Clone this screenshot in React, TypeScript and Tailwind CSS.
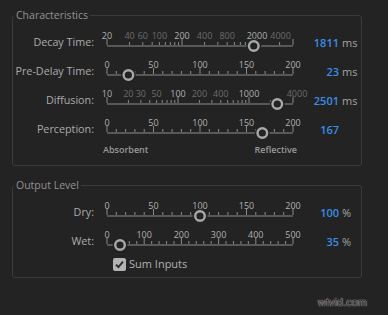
import React from "react";

type Tick = { x: number; major?: boolean };
type Label = { x: number; text: string; dim?: boolean };

const BG = "#232323";

const lin = (min: number, max: number) => (v: number) => 7 + (186 * (v - min)) / (max - min);
const decayX = (v: number) => 7 + 75 * Math.log10(v / 20);
const diffX = (v: number) => 7 + 71 * Math.log10(v / 10);

const range = (from: number, to: number, step: number) => {
  const out: number[] = [];
  for (let v = from; v <= to; v += step) out.push(v);
  return out;
};

// linear scale: minor every `minor`, major every `major`
const linearScale = (max: number, minor: number, major: number) => {
  const f = lin(0, max);
  const ticks: Tick[] = range(0, max, minor).map((v) => ({ x: f(v), major: v % major === 0 }));
  const labels: Label[] = range(0, max, major).map((v) => ({ x: f(v), text: String(v) }));
  return { ticks, labels, f };
};

const decay = {
  ticks: [
    ...[20, 200, 2000].map((v) => ({ x: decayX(v), major: true })),
    ...[40, 60, 80, 100, 120, 140, 160, 180, 400, 600, 800, 1000, 1200, 1400, 1600, 1800, 4000].map((v) => ({
      x: decayX(v),
    })),
    { x: 193, major: true },
  ],
  labels: [
    { x: decayX(20), text: "20" },
    { x: decayX(40), text: "40", dim: true },
    { x: decayX(60), text: "60", dim: true },
    { x: decayX(100), text: "100", dim: true },
    { x: decayX(200), text: "200" },
    { x: decayX(400), text: "400", dim: true },
    { x: decayX(800), text: "800", dim: true },
    { x: decayX(2000), text: "2000" },
    { x: decayX(4000) + 1, text: "4000", dim: true },
  ],
};

const diffusion = {
  ticks: [
    ...[10, 100, 1000].map((v) => ({ x: diffX(v), major: true })),
    ...[...range(20, 90, 10), ...range(200, 900, 100), 2000, 3000].map((v) => ({ x: diffX(v) })),
    { x: 193, major: true },
  ],
  labels: [
    { x: diffX(10), text: "10" },
    { x: diffX(20), text: "20", dim: true },
    { x: diffX(30), text: "30", dim: true },
    { x: diffX(50), text: "50", dim: true },
    { x: diffX(100), text: "100" },
    { x: diffX(200), text: "200", dim: true },
    { x: diffX(400), text: "400", dim: true },
    { x: diffX(1000), text: "1000" },
    { x: 197, text: "4000", dim: true },
  ],
};

const two = linearScale(200, 10, 50);
const five = linearScale(500, 20, 100);

const Slider = ({ ticks, labels, knob }: { ticks: Tick[]; labels: Label[]; knob: number }) => (
  <svg width="210" height="29" className="shrink-0 ml-[6px]">
    <rect x="7" y="17" width="186" height="2" fill="#585858" />
    {ticks.map((t, i) => (
      <rect key={i} x={t.x - 0.5} y={t.major ? 11 : 14} width="1" height={t.major ? 6 : 3} fill="#8a8a8a" />
    ))}
    {labels.map((l, i) => (
      <text
        key={i}
        x={l.x}
        y="7.5"
        textAnchor="middle"
        dominantBaseline="central"
        fontSize="9"
        fill={l.dim ? "#6c6c6c" : "#b2b2b2"}
      >
        {l.text}
      </text>
    ))}
    <circle cx={knob} cy="18" r="7.5" fill={BG} />
    <circle cx={knob} cy="18" r="4.8" fill={BG} stroke="#a9a9a9" strokeWidth="2.4" />
  </svg>
);

const Row = ({
  label,
  value,
  unit,
  children,
}: {
  label: string;
  value: string;
  unit?: string;
  children: React.ReactNode;
}) => (
  <div className="flex items-start h-[29px]">
    <div className="w-[81px] shrink-0 text-right text-[10.75px] leading-[15px] mt-[7px] text-[#ababab] whitespace-nowrap">
      {label}
    </div>
    {children}
    <div className="flex items-baseline mt-[7px] text-[11px] leading-[15px]">
      <span className="w-[29px] text-right font-semibold text-[#3a8ee6]">{value}</span>
      {unit && <span className="ml-[3px] text-[#a3a3a3]">{unit}</span>}
    </div>
  </div>
);

const Group = ({ title, className, children }: { title: string; className: string; children: React.ReactNode }) => (
  <fieldset className={`w-[350px] border border-[#3a3a3a] rounded-[3px] ${className}`}>
    <legend className="ml-[1px] px-[2px] text-[10.5px] leading-[15px] text-[#929292]">{title}</legend>
    {children}
  </fieldset>
);

export default function App() {
  return (
    <div className="relative w-[388px] h-[315px] overflow-hidden bg-[#232323] pt-[8px] pl-[12px] font-['Open_Sans',sans-serif]">
      <Group title="Characteristics" className="h-[158px]">
        <div className="mt-[5px]">
          <Row label="Decay Time:" value="1811" unit="ms">
            <Slider ticks={decay.ticks} labels={decay.labels} knob={decayX(1811)} />
          </Row>
          <Row label="Pre-Delay Time:" value="23" unit="ms">
            <Slider ticks={two.ticks} labels={two.labels} knob={two.f(23)} />
          </Row>
          <Row label="Diffusion:" value="2501" unit="ms">
            <Slider ticks={diffusion.ticks} labels={diffusion.labels} knob={diffX(2501)} />
          </Row>
          <Row label="Perception:" value="167">
            <Slider ticks={two.ticks} labels={two.labels} knob={two.f(167)} />
          </Row>
          <div className="flex h-[12px] text-[9px] leading-[12px] font-semibold text-[#9a9a9a]">
            <div className="w-[90px]" />
            <span>Absorbent</span>
            <div className="flex-1" />
            <span>Reflective</span>
            <div className="w-[64px]" />
          </div>
        </div>
      </Group>

      <Group title="Output Level" className="h-[100px] mt-[12px]">
        <div className="mt-[5px]">
          <Row label="Dry:" value="100" unit="%">
            <Slider ticks={two.ticks} labels={two.labels} knob={two.f(100)} />
          </Row>
          <Row label="Wet:" value="35" unit="%">
            <Slider ticks={five.ticks} labels={five.labels} knob={five.f(35)} />
          </Row>
          <label className="flex items-center h-[15px] mt-[1px] pl-[100px] text-[11px] text-[#b0b0b0]">
            <span className="flex items-center justify-center w-[13px] h-[13px] rounded-[2px] bg-[#b3b3b3]">
              <svg width="11" height="11" viewBox="0 0 11 11">
                <path d="M2 5.6 L4.4 8 L9 2.6" fill="none" stroke="#2a2a2a" strokeWidth="1.9" />
              </svg>
            </span>
            <span className="ml-[3px]">Sum Inputs</span>
          </label>
        </div>
      </Group>

      <div className="absolute right-[21px] bottom-[5px] text-[11px] text-[#1a1a1a] [text-shadow:0_0_1px_#d0d0d0,0_0_1px_#d0d0d0] font-['Liberation_Sans',sans-serif]">
        wtvid.com
      </div>
    </div>
  );
}
